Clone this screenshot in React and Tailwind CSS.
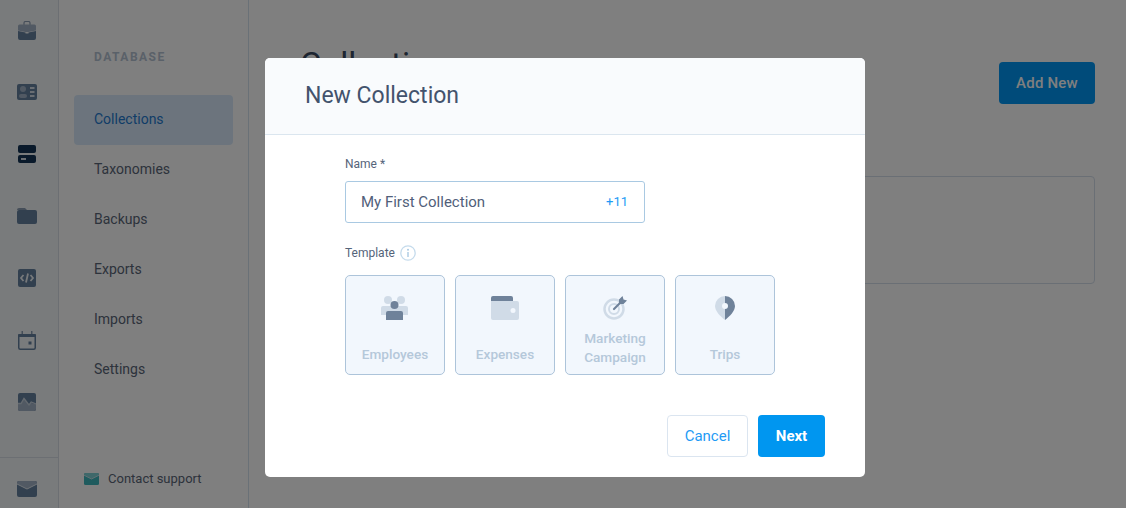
import React from "react";

const railDark = "#64809f";

function Briefcase() {
  return (
    <svg width="18" height="19" viewBox="0 0 18 19">
      <path d="M6 4V2a1.5 1.5 0 0 1 1.5-1.5h3A1.5 1.5 0 0 1 12 2v2" fill="none" stroke="#8b9db3" strokeWidth="1.2" />
      <path d="M1.5 3.5h15A1.5 1.5 0 0 1 18 5v4.5L10.5 11h-3L0 9.5V5a1.5 1.5 0 0 1 1.5-1.5z" fill="#a3b3c6" />
      <path d="M0 10l7.5 1.5v1h3v-1L18 10v7a2 2 0 0 1-2 2H2a2 2 0 0 1-2-2z" fill={railDark} />
    </svg>
  );
}

function IdCard() {
  return (
    <svg width="20" height="16" viewBox="0 0 20 16">
      <rect width="20" height="16" rx="2" fill={railDark} />
      <circle cx="6" cy="5" r="3" fill="#a3b3c6" />
      <rect x="2" y="10" width="8" height="4" rx="2" fill="#a3b3c6" />
      <path d="M13 3h4.500v2H13zM13 7h4.500v2H13zM13 11h4.500v2H13z" fill="#d5dde6" />
    </svg>
  );
}

function Database() {
  return (
    <svg width="18" height="18" viewBox="0 0 18 18">
      <rect width="18" height="8" rx="2" fill="#143556" />
      <rect y="10" width="18" height="8" rx="2" fill="#143556" />
      <rect x="3" y="13" width="5" height="2" fill="#d5dde6" />
    </svg>
  );
}

function Folder() {
  return (
    <svg width="20" height="16" viewBox="0 0 20 16">
      <path d="M0 2a2 2 0 0 1 2-2h6l2 2H2z" fill="#8b9db3" />
      <path d="M0 4a2 2 0 0 1 2-2h16a2 2 0 0 1 2 2v10a2 2 0 0 1-2 2H2a2 2 0 0 1-2-2z" fill={railDark} />
    </svg>
  );
}

function Code() {
  return (
    <svg width="18" height="18" viewBox="0 0 18 18">
      <rect width="18" height="18" rx="2" fill={railDark} />
      <path d="M5.500 6L3 9l2.500 3M12.500 6L15 9l-2.500 3M10 4.500L8 13.500" fill="none" stroke="#eef2f6" strokeWidth="1.800" />
    </svg>
  );
}

function Calendar() {
  return (
    <svg width="18" height="19" viewBox="0 0 18 19">
      <path d="M3.500 0H5v4H3.500zM13 0h1.500v4H13z" fill="#8b9db3" />
      <rect x="0.750" y="3.750" width="16.500" height="14.500" rx="1.500" fill="none" stroke={railDark} strokeWidth="1.500" />
      <rect x="0" y="3" width="18" height="3" rx="1" fill={railDark} />
      <rect x="10.500" y="10.500" width="3" height="3" fill={railDark} />
    </svg>
  );
}

function Activity() {
  return (
    <svg width="18" height="18" viewBox="0 0 18 18">
      <rect width="18" height="18" rx="2" fill={railDark} />
      <path d="M0 10l3 0 3-5 5 7 2-2 5 1v5a2 2 0 0 1-2 2H2a2 2 0 0 1-2-2z" fill="#a3b3c6" />
      <path d="M0 10.500h3l3-5 5 6.500 2.200-3L18 11" fill="none" stroke="#c7d2de" strokeWidth="1.300" />
    </svg>
  );
}

function Envelope({ back = railDark, flap = "#a3b3c6", w = 20, h = 16 }) {
  return (
    <svg width={w} height={h} viewBox="0 0 20 16">
      <rect width="20" height="16" rx="2" fill={back} />
      <path d="M0 2a2 2 0 0 1 2-2h16a2 2 0 0 1 2 2v1l-10 5L0 3z" fill={flap} />
      <path d="M0 3l10 5 10-5" fill="none" stroke="#dfe6ee" strokeWidth="1" />
    </svg>
  );
}

function EmployeesIcon() {
  return (
    <svg width="28" height="24" viewBox="0 0 28 24">
      <circle cx="7" cy="4" r="4" fill="#d0dbe7" />
      <circle cx="20" cy="4" r="4" fill="#d0dbe7" />
      <path d="M0 12a2 2 0 0 1 2-2h23a2 2 0 0 1 2 2v7H0z" fill="#d0dbe7" />
      <circle cx="13.500" cy="9" r="4" fill="#6f829a" />
      <path d="M5 17a2 2 0 0 1 2-2h13a2 2 0 0 1 2 2v7H5z" fill="#6f829a" />
    </svg>
  );
}

function WalletIcon() {
  return (
    <svg width="28" height="24" viewBox="0 0 28 24">
      <path d="M2 0h18a2 2 0 0 1 2 2v3H0V2a2 2 0 0 1 2-2z" fill="#6f829a" />
      <path d="M0 5h26a2 2 0 0 1 2 2v15a2 2 0 0 1-2 2H2a2 2 0 0 1-2-2z" fill="#d0dbe7" />
      <circle cx="22" cy="14.500" r="2.500" fill="#f2f7fd" />
    </svg>
  );
}

function TargetIcon() {
  return (
    <svg width="24" height="24" viewBox="0 0 24 24">
      <circle cx="11" cy="13" r="9.500" fill="none" stroke="#d0dbe7" strokeWidth="2.500" />
      <circle cx="11" cy="13" r="5" fill="none" stroke="#d0dbe7" strokeWidth="2" />
      <path d="M11 13l8-8" stroke="#6f829a" strokeWidth="2.200" strokeLinecap="round" />
      <path d="M16 3.500L19.500 0l1 3.500L24 4.500 20.500 8 16 8z" fill="#6f829a" />
    </svg>
  );
}

function PinIcon() {
  return (
    <svg width="20" height="24" viewBox="0 0 20 24">
      <path d="M10 0A10 10 0 0 0 0 10c0 5 5 10 10 14z" fill="#d0dbe7" />
      <path d="M10 0a10 10 0 0 1 10 10c0 5-5 10-10 14z" fill="#6f829a" />
      <circle cx="10" cy="10" r="3" fill="#f2f7fd" />
    </svg>
  );
}

const railIcons = [Briefcase, IdCard, Database, Folder, Code, Calendar, Activity];
const navItems = ["Collections", "Taxonomies", "Backups", "Exports", "Imports", "Settings"];
const templates = [
  { name: "Employees", Icon: EmployeesIcon, label: "pb-[10px]" },
  { name: "Expenses", Icon: WalletIcon, label: "pb-[10px]" },
  { name: "Marketing Campaign", Icon: TargetIcon, label: "pb-[7px]" },
  { name: "Trips", Icon: PinIcon, label: "pb-[10px]" },
];

export default function App() {
  return (
    <div className="relative flex h-[508px] w-[1126px] overflow-hidden bg-white font-['Roboto',sans-serif]">
      {/* icon rail */}
      <div className="flex w-[59px] shrink-0 flex-col border-r border-[#d8dfe7] bg-[#f3f6f9]">
        {railIcons.map((Icon, i) => (
          <div key={i} className="flex h-[62px] items-center justify-center pb-[2px] pr-1">
            <Icon />
          </div>
        ))}
        <div className="mt-auto flex h-[51px] items-end justify-center border-t border-[#d8dfe7] pb-[11px] pr-1">
          <Envelope />
        </div>
      </div>

      {/* database sidebar */}
      <div className="flex w-[190px] shrink-0 flex-col border-r border-[#d4e2ee] pb-[21px] pl-[15px] pr-[15px] pt-[50px]">
        <div className="pl-5 text-xs font-bold leading-[14px] tracking-[1.500px] text-[#b4c2d2]">DATABASE</div>
        <div className="mt-[31px] flex flex-col">
          {navItems.map((item, i) => (
            <div
              key={item}
              className={`flex h-[50px] items-center rounded pb-[2px] pl-5 text-sm ${
                i === 0 ? "bg-[#d9e9fa] text-[#1f7ad0]" : "text-[#5a6678]"
              }`}
            >
              {item}
            </div>
          ))}
        </div>
        <div className="mt-auto flex items-center gap-[9px] pl-[10px] text-[13px] leading-4 text-[#5a6678]">
          <Envelope back="#3fb6bd" flap="#7fd0d4" w={15} h={12} />
          <span>Contact support</span>
        </div>
      </div>

      {/* main content */}
      <div className="flex-1 pl-[51px] pr-[31px] pt-[44px]">
        <div className="flex items-start justify-between">
          <h1 className="mt-[3px] text-[33px] font-normal leading-9 text-[#3b4b63]">Collections</h1>
          <button className="mt-[18px] h-[42px] w-[96px] rounded bg-[#0097f4] text-[15px] font-medium tracking-[0.2px] text-white">
            Add New
          </button>
        </div>
        <div className="mt-[72px] h-[108px] rounded border border-[#d4deea]" />
      </div>

      {/* modal */}
      <div className="absolute inset-0 bg-black/50 pl-[265px] pt-[58px]">
        <div className="w-[600px] overflow-hidden rounded-[5px] bg-white">
          <div className="flex h-[77px] items-center border-b border-[#dbe6ef] bg-[#f9fbfd] pl-10">
            <h2 className="text-[23px] font-normal text-[#43536d]">New Collection</h2>
          </div>
          <div className="px-20 pt-[21px]">
            <label className="block text-xs leading-4 text-[#55647a]">Name *</label>
            <div className="mt-[9px] flex h-[42px] w-[300px] items-center justify-between rounded-[3px] border border-[#a9c9e2] pl-[15px] pr-4 text-[15px]">
              <span className="text-[#51607a]">My First Collection</span>
              <span className="text-[13px] text-[#1f9bf5]">+11</span>
            </div>
            <div className="mt-[22px] flex items-center gap-[5px] text-xs leading-4 text-[#55647a]">
              <span>Template</span>
              <svg width="16" height="16" viewBox="0 0 16 16">
                <circle cx="8" cy="8" r="7.200" fill="none" stroke="#c5dbec" strokeWidth="1.300" />
                <path d="M8 7v5" stroke="#a9c9e2" strokeWidth="1.400" />
                <circle cx="8" cy="4.700" r="1" fill="#a9c9e2" />
              </svg>
            </div>
            <div className="mt-[14px] flex gap-[10px]">
              {templates.map(({ name, Icon, label }) => (
                <div
                  key={name}
                  className="flex h-[100px] w-[100px] flex-col items-center rounded-[5px] border border-[#adc4da] bg-[#f2f7fd] pt-[20px]"
                >
                  <div className="flex h-[24px] items-center justify-center">
                    <Icon />
                  </div>
                  <div className={`flex flex-1 items-end justify-center text-center text-[13.600px] font-medium leading-[19px] text-[#b5c8da] ${label}`}>
                    {name}
                  </div>
                </div>
              ))}
            </div>
          </div>
          <div className="flex justify-end gap-[10px] pb-5 pr-10 pt-10">
            <button className="h-[42px] w-[81px] rounded border border-[#dbe5f0] bg-white text-[15px] text-[#1f9bf5]">
              Cancel
            </button>
            <button className="h-[42px] w-[67px] rounded bg-[#0096f0] text-[15px] font-bold text-white">Next</button>
          </div>
        </div>
      </div>
    </div>
  );
}
